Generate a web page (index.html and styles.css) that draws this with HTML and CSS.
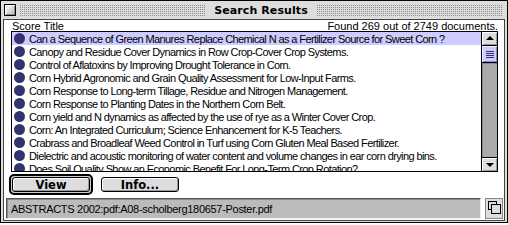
FILE: index.html
```html
<!DOCTYPE html>
<html>
<head>
<meta charset="utf-8">
<link rel="stylesheet" href="styles.css">
</head>
<body>
<div class="window">
  <div class="titlebar">
    <div class="closebox"></div>
    <div class="stripes"></div>
    <div class="title">Search Results</div>
    <div class="stripes"></div>
  </div>
  <div class="frame">
    <div class="content">
      <div class="header">
        <span>Score Title</span>
        <span>Found 269 out of 2749 documents.</span>
      </div>
      <div class="listbox">
        <div class="rows">
          <div class="row selected"><span class="dot"></span>Can a Sequence of Green Manures Replace Chemical N as a Fertilizer Source for Sweet Corn ?</div>
          <div class="row"><span class="dot"></span>Canopy and Residue Cover Dynamics in Row Crop-Cover Crop Systems.</div>
          <div class="row"><span class="dot"></span>Control of Aflatoxins by Improving Drought Tolerance in Corn.</div>
          <div class="row"><span class="dot"></span>Corn Hybrid Agronomic and Grain Quality Assessment for Low-Input Farms.</div>
          <div class="row"><span class="dot"></span>Corn Response to Long-term Tillage, Residue and Nitrogen Management.</div>
          <div class="row"><span class="dot"></span>Corn Response to Planting Dates in the Northern Corn Belt.</div>
          <div class="row"><span class="dot"></span>Corn yield and N dynamics as affected by the use of rye as a Winter Cover Crop.</div>
          <div class="row"><span class="dot"></span>Corn: An Integrated Curriculum; Science Enhancement for K-5 Teachers.</div>
          <div class="row"><span class="dot"></span>Crabrass and Broadleaf Weed Control in Turf using Corn Gluten Meal Based Fertilizer.</div>
          <div class="row"><span class="dot"></span>Dielectric and acoustic monitoring of water content and volume changes in ear corn drying bins.</div>
          <div class="row"><span class="dot"></span>Does Soil Quality Show an Economic Benefit For Long-Term Crop Rotation?</div>
        </div>
        <div class="scrollbar">
          <div class="arrow up"><svg width="14" height="13" viewBox="0 0 14 13"><path d="M3 8h8L7 4z" fill="#000"/></svg></div>
          <div class="thumb"><span></span><span></span><span></span><span></span></div>
          <div class="track"></div>
          <div class="arrow down"><svg width="14" height="13" viewBox="0 0 14 13"><path d="M3 5h8L7 9z" fill="#000"/></svg></div>
        </div>
      </div>
      <div class="buttons">
        <div class="default-ring"><div class="button">View</div></div>
        <div class="button">Info...</div>
      </div>
      <div class="statusrow">
        <div class="status">ABSTRACTS 2002:pdf:A08-scholberg180657-Poster.pdf</div>
        <div class="sizebox"><span class="sq1"></span><span class="sq2"></span></div>
      </div>
    </div>
  </div>
</div>
</body>
</html>
```

FILE: styles.css
```css
* { box-sizing: border-box; }
html, body { margin: 0; padding: 0; background: #fff; }
body { width: 508px; height: 225px; overflow: hidden; font-family: "Liberation Sans", Arial, sans-serif; }

.window {
  width: 508px;
  height: 223px;
  border: 1px solid #000;
  background: #dddddd;
  display: flex;
  flex-direction: column;
}

.titlebar {
  height: 18px;
  display: flex;
  align-items: center;
  padding: 0 5px 0 3px;
  gap: 4px;
  flex: none;
}
.closebox {
  width: 12px;
  height: 12px;
  border: 1px solid #000;
  background: linear-gradient(135deg, #fff, #bbb);
  box-shadow: inset 1px 1px 0 #fff, inset -1px -1px 0 #888;
  flex: none;
}
.stripes {
  flex: 1;
  height: 11px;
  background-color: #dddddd;
  background-image: radial-gradient(circle at 0.5px 0.5px, #8a8a8a 0.7px, transparent 0.8px);
  background-size: 2px 2px;
}
.title {
  font-family: "DejaVu Sans", sans-serif;
  font-weight: bold;
  font-size: 11px;
  letter-spacing: 0.1px;
  padding: 0 5px;
  color: #000;
}

.frame {
  flex: 1;
  padding: 0 2px 1px 2px;
  display: flex;
}
.content {
  flex: 1;
  background: #fff;
  border: 1px solid #444;
  display: flex;
  flex-direction: column;
  padding: 0 6px 1px 7px;
}

.header {
  height: 11px;
  display: flex;
  justify-content: space-between;
  align-items: center;
  font-size: 11px;
  padding-left: 1px;
  color: #000;
}

.listbox {
  height: 141px;
  border: 1px solid #000;
  display: flex;
  flex: none;
}
.rows {
  flex: 1;
  overflow: hidden;
}
.row {
  height: 13px;
  display: flex;
  align-items: center;
  font-size: 11px;
  letter-spacing: -0.6px;
  white-space: nowrap;
  padding-left: 2px;
  color: #000;
}
.row.selected { background: #ccccff; }
.dot {
  width: 11px;
  height: 11px;
  border-radius: 50%;
  background: #33336e;
  margin-right: 4px;
  flex: none;
}

.scrollbar {
  width: 16px;
  border-left: 1px solid #000;
  display: flex;
  flex-direction: column;
  background: #aaaaaa;
  flex: none;
}
.arrow {
  height: 13px;
  background: #dddddd;
  box-shadow: inset 1px 1px 0 #fff, inset -1px -1px 0 #999;
  display: flex;
  align-items: center;
  justify-content: center;
  flex: none;
}
.arrow.up { border-bottom: 1px solid #000; height: 14px; }
.arrow.down { border-top: 1px solid #000; height: 14px; }
.thumb {
  height: 17px;
  background: #ccccff;
  border-bottom: 1px solid #000;
  display: flex;
  flex-direction: column;
  justify-content: center;
  align-items: center;
  gap: 1px;
  box-shadow: inset 1px 1px 0 #eeeeff, inset -1px -1px 0 #8888cc;
  flex: none;
}
.thumb span {
  width: 8px;
  height: 1px;
  background: #33336e;
}
.track {
  flex: 1;
  background: #aaaaaa;
  box-shadow: inset 1px 1px 0 #888;
}

.buttons {
  height: 25px;
  display: flex;
  align-items: center;
  gap: 8px;
  flex: none;
}
.default-ring {
  border: 2px solid #000;
  border-radius: 5px;
  padding: 1px;
  background: #ccc;
  margin-left: -2px;
}
.button {
  width: 78px;
  height: 15px;
  border: 1px solid #000;
  border-radius: 3px;
  background: #dddddd;
  box-shadow: inset 1px 1px 0 #fff, inset -1px -1px 0 #999;
  font-family: "DejaVu Sans", sans-serif;
  font-weight: bold;
  font-size: 11.5px;
  display: flex;
  align-items: center;
  justify-content: center;
  color: #000;
}

.statusrow {
  flex: 1;
  display: flex;
  align-items: stretch;
  gap: 4px;
  margin-left: -5px;
  margin-right: -5px;
  padding-top: 1px;
}
.status {
  flex: 1;
  background: #bbbbbb;
  border: 1px solid #555;
  border-right-color: #eee;
  border-bottom-color: #eee;
  box-shadow: inset 1px 1px 0 #888;
  font-size: 11px;
  letter-spacing: -0.3px;
  display: flex;
  align-items: center;
  padding-left: 4px;
  color: #000;
}
.sizebox {
  width: 18px;
  position: relative;
  background: #dddddd;
  border: 1px solid #888;
}
.sizebox .sq1 {
  position: absolute;
  left: 2px; top: 2px;
  width: 9px; height: 9px;
  border: 1px solid #000;
}
.sizebox .sq2 {
  position: absolute;
  left: 5px; top: 5px;
  width: 10px; height: 10px;
  border: 1px solid #000;
  background: #dddddd;
}
```
